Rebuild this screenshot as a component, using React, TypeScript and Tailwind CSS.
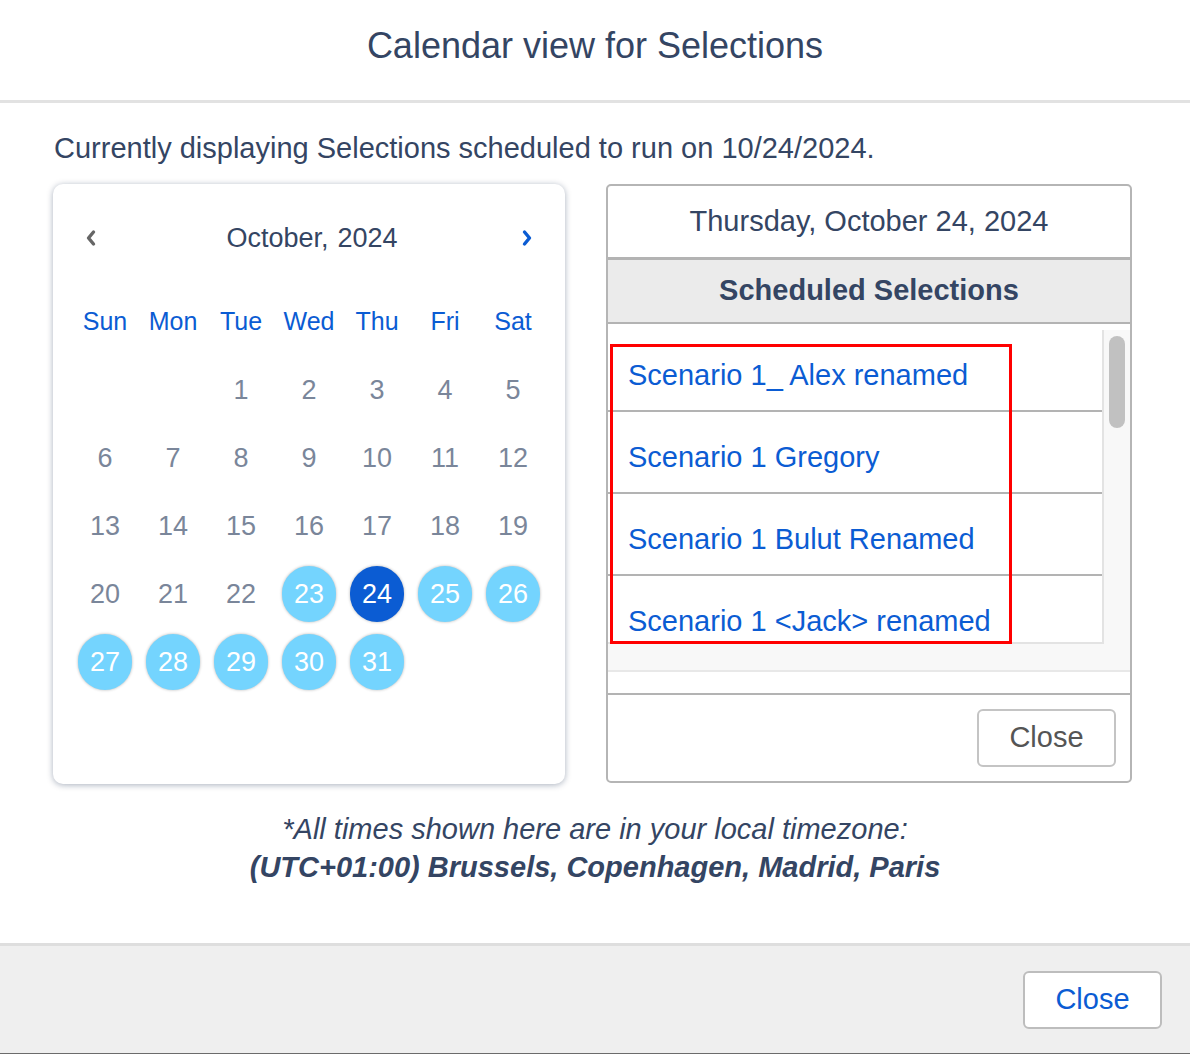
import React from "react";

const font = { fontFamily: '"Liberation Sans", Arial, Helvetica, sans-serif' };

function Chevron({ dir, color }: { dir: "left" | "right"; color: string }) {
  return (
    <svg width="12" height="18" viewBox="0 0 12 18" fill="none">
      {dir === "left" ? (
        <path d="M8.5 3 L3.5 9 L8.5 15" stroke={color} strokeWidth="3.4" strokeLinecap="round" strokeLinejoin="round" />
      ) : (
        <path d="M3.5 3 L8.5 9 L3.5 15" stroke={color} strokeWidth="3.4" strokeLinecap="round" strokeLinejoin="round" />
      )}
    </svg>
  );
}

const weekdays = ["Sun", "Mon", "Tue", "Wed", "Thu", "Fri", "Sat"];

function DayCell({ d }: { d: number | null }) {
  if (d === null) return <div className="h-[68px]" />;
  const scheduled = d >= 23;
  const selected = d === 24;
  return (
    <div className="h-[68px] flex items-center justify-center">
      {scheduled ? (
        <div
          className={
            selected
              ? "w-[54px] h-[56px] rounded-full bg-[#0b5cd3] text-white flex items-center justify-center text-[27px] shadow-[0_0_3px_rgba(0,0,0,0.3)]"
              : "w-[54px] h-[56px] rounded-full bg-[#74d4fe] text-white flex items-center justify-center text-[27px] shadow-[0_0_3px_rgba(0,0,0,0.3)]"
          }
        >
          {d}
        </div>
      ) : (
        <span className="text-[27px] text-[#7a869a]">{d}</span>
      )}
    </div>
  );
}

export default function App() {
  const days: (number | null)[] = [null, null];
  for (let i = 1; i <= 31; i++) days.push(i);
  while (days.length % 7 !== 0) days.push(null);

  const items = [
    "Scenario 1_ Alex renamed",
    "Scenario 1 Gregory",
    "Scenario 1 Bulut Renamed",
    "Scenario 1 <Jack> renamed",
  ];

  return (
    <div style={font} className="w-[1190px] h-[1054px] bg-white flex flex-col overflow-hidden">
      {/* Header */}
      <div className="h-[103px] border-b-[3px] border-[#e2e2e2] flex items-center justify-center pb-[8px]">
        <h1 className="text-[36px] text-[#344563] leading-none">Calendar view for Selections</h1>
      </div>

      {/* Body */}
      <div className="h-[840px] flex flex-col pt-[28px]">
        <p className="pl-[54px] text-[29px] leading-[34px] text-[#344563]">
          Currently displaying Selections scheduled to run on 10/24/2024.
        </p>

        <div className="flex mt-[19px] pl-[53px] gap-[41px]">
          {/* Calendar card */}
          <div className="w-[512px] h-[600px] rounded-[10px] bg-white shadow-[0_1px_6px_rgba(9,30,66,0.35)] px-[18px] pt-[30px]">
            <div className="h-[48px] flex items-center justify-between px-[14px]">
              <Chevron dir="left" color="#666666" />
              <div className="text-[27px] text-[#344563] flex gap-[9px] pl-[6px]">
                <span>October,</span>
                <span>2024</span>
              </div>
              <Chevron dir="right" color="#0b5cd3" />
            </div>
            <div className="grid grid-cols-7 mt-[26px]">
              {weekdays.map((w) => (
                <div key={w} className="h-[68px] flex items-center justify-center text-[25px] text-[#0b5cd3]">
                  {w}
                </div>
              ))}
              {days.map((d, i) => (
                <DayCell key={i} d={d} />
              ))}
            </div>
          </div>

          {/* Right panel */}
          <div className="w-[526px] h-[599px] border-2 border-[#b5b5b5] rounded-[5px] flex flex-col overflow-hidden">
            <div className="h-[71px] flex items-center justify-center text-[29px] text-[#344563] border-b-[3px] border-[#b3b3b3] box-content">
              Thursday, October 24, 2024
            </div>
            <div className="h-[62px] bg-[#ebebeb] flex items-center justify-center text-[29px] font-bold text-[#344563] border-b-2 border-[#b3b3b3] box-content">
              Scheduled Selections
            </div>

            <div className="relative h-[363px] flex flex-col pt-[6px] border-b-2 border-[#b3b3b3] box-content">
              <div className="flex h-[314px]">
                <div className="flex-1 h-[314px] border-b-2 border-[#e3e3e3] overflow-hidden">
                  {items.map((t) => (
                    <div
                      key={t}
                      className="h-[82px] border-b-2 border-[#b3b3b3] pt-[30px] pl-[20px] text-[29px] leading-[30px] text-[#0b5cd3] whitespace-nowrap"
                    >
                      {t}
                    </div>
                  ))}
                </div>
                <div className="w-[28px] bg-[#f8f8f8] border-l-2 border-[#e3e3e3] pt-[6px] flex justify-center">
                  <div className="w-[16px] h-[92px] rounded-full bg-[#c1c1c1]" />
                </div>
              </div>
              <div className="h-[26px] bg-[#f8f8f8] border-b-2 border-[#e8e8e8] box-content" />
              <div className="flex-1 bg-white" />

              <div className="absolute left-[2px] top-[20px] w-[402px] h-[300px] border-[3px] border-[#ff0000]" />
            </div>

            <div className="flex-1 flex items-start justify-end pt-[14px] pr-[14px]">
              <button className="w-[139px] h-[58px] rounded-[6px] border-2 border-[#c4c4c4] bg-white text-[29px] text-[#555555]">
                Close
              </button>
            </div>
          </div>
        </div>

        <div className="mt-[26px] text-center text-[29px] leading-[38px] text-[#344563] italic">
          <div>*All times shown here are in your local timezone:</div>
          <div className="font-bold">(UTC+01:00) Brussels, Copenhagen, Madrid, Paris</div>
        </div>
      </div>

      {/* Footer */}
      <div className="flex-1 bg-[#efefef] border-t-[3px] border-[#dedede] border-b border-b-[#6b6b6b] flex justify-end pt-[25px] pr-[28px]">
        <button className="w-[139px] h-[58px] rounded-[6px] border-2 border-[#bdbdbd] bg-white text-[29px] text-[#0b5cd3]">
          Close
        </button>
      </div>
    </div>
  );
}
